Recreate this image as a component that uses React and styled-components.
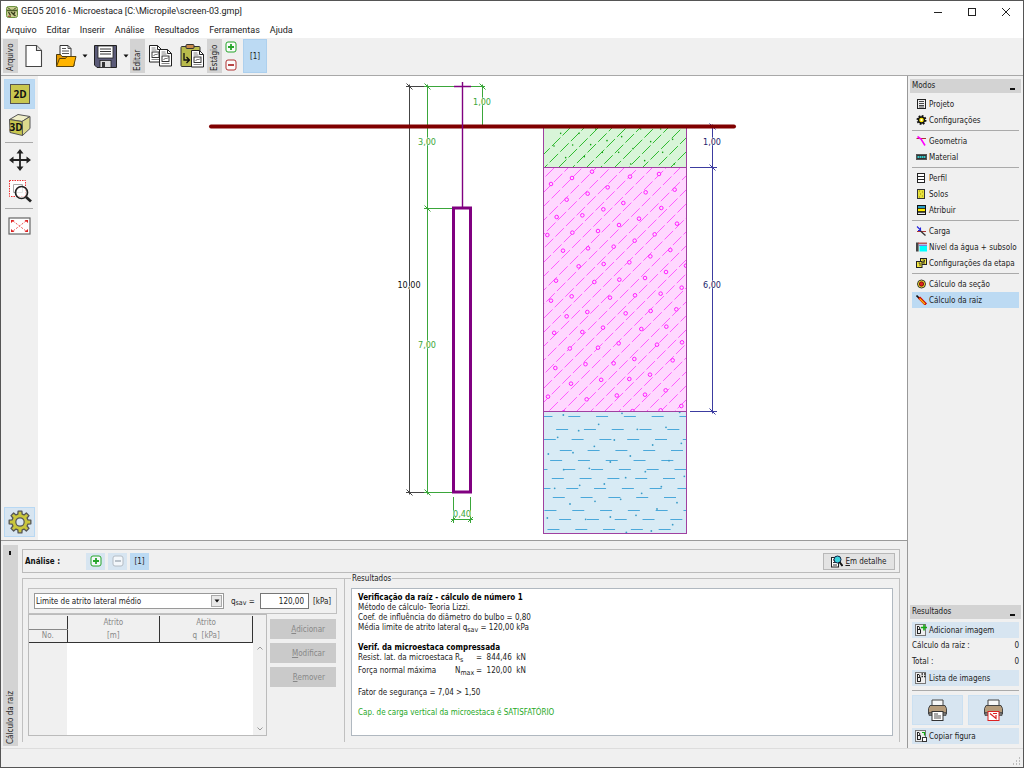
import React from 'react';
import styled, { createGlobalStyle } from 'styled-components';

const modeGroups = [
  [
    { label: 'Projeto', icon: 'project' },
    { label: 'Configurações', icon: 'settings' },
  ],
  [
    { label: 'Geometria', icon: 'geometry' },
    { label: 'Material', icon: 'material' },
  ],
  [
    { label: 'Perfil', icon: 'profile' },
    { label: 'Solos', icon: 'soils' },
    { label: 'Atribuir', icon: 'assign' },
  ],
  [
    { label: 'Carga', icon: 'load' },
    { label: 'Nível da água + subsolo', icon: 'water' },
    { label: 'Configurações da etapa', icon: 'stage' },
  ],
  [
    { label: 'Cálculo da seção', icon: 'section' },
    { label: 'Cálculo da raiz', icon: 'root', active: true },
  ],
];

const menu = ['Arquivo', 'Editar', 'Inserir', 'Análise', 'Resultados', 'Ferramentas', 'Ajuda'];

/* ---------- icons ---------- */

const GearShape = ({ teeth = 8, r = 8, fill, stroke, hole }) => {
  const pts = [];
  for (let i = 0; i < teeth; i++) {
    const a = (i * 2 * Math.PI) / teeth;
    [[-0.3, 0.74], [-0.19, 1], [0.19, 1], [0.3, 0.74]].forEach(([d, k]) => {
      pts.push(`${(Math.sin(a + d * 0.9) * r * k).toFixed(2)},${(-Math.cos(a + d * 0.9) * r * k).toFixed(2)}`);
    });
  }
  return (
    <>
      <polygon points={pts.join(' ')} fill={fill} stroke={stroke} strokeWidth="1.3" strokeLinejoin="round" />
      <circle r={r * 0.38} fill={hole} stroke={stroke} strokeWidth="1.2" />
    </>
  );
};

const modeIcons = {
  project: (
    <>
      <rect x="1.5" y="0.5" width="8" height="9" fill="#eee" stroke="#222" />
      <path d="M3 2.5h5M3 4.5h5M3 6.5h5M3 8h5" stroke="#333" strokeWidth="0.9" />
    </>
  ),
  settings: (
    <>
      <circle cx="5.5" cy="5" r="4" fill="none" stroke="#111" strokeWidth="2" strokeDasharray="1.7 1.4" />
      <circle cx="5.5" cy="5" r="3" fill="#ffe800" stroke="#111" strokeWidth="1.4" />
      <circle cx="5.5" cy="5" r="1" fill="#fff" />
    </>
  ),
  geometry: (
    <>
      <path d="M0.5 2.5H10" stroke="#a33" />
      <path d="M1.5 0.500l3.500 2.500 4 6.5" fill="none" stroke="#f0f" strokeWidth="1.6" />
    </>
  ),
  material: (
    <>
      <rect x="0.5" y="2.5" width="10" height="5" fill="#333" stroke="#555" />
      <path d="M1.5 5h8" stroke="#3cc" strokeWidth="2" strokeDasharray="1.6 0.5" />
    </>
  ),
  profile: (
    <>
      <rect x="1.5" y="0.5" width="7" height="9" fill="#fff" stroke="#222" />
      <path d="M1.5 3.5h7M1.5 6.5h7" stroke="#222" />
    </>
  ),
  soils: (
    <>
      <rect x="1.5" y="0.5" width="7" height="9" fill="#e8e13c" stroke="#333" />
      <path d="M3 2h1M6 3h1M4 5h1M6 7h1M3 8h1" stroke="#998b00" />
    </>
  ),
  assign: (
    <>
      <rect x="1.5" y="0.5" width="8" height="9" fill="#111" stroke="#111" />
      <path d="M2 2h7" stroke="#3cf" strokeWidth="1.5" />
      <path d="M2 5h7" stroke="#fe0" strokeWidth="2.4" />
      <path d="M2 8.3h7" stroke="#fff" strokeWidth="1.2" />
    </>
  ),
  load: (
    <>
      <path d="M1 5.5h9" stroke="#a33" />
      <path d="M1 0.5l4 4M2 4.5h2.5V1.5" fill="none" stroke="#22d" strokeWidth="1.1" />
      <path d="M4.5 5l5 4.5" stroke="#333" strokeWidth="1.3" />
    </>
  ),
  water: (
    <>
      <rect x="0" y="0.5" width="2.6" height="9" fill="#444" />
      <rect x="3.5" y="4" width="7.5" height="5.5" fill="#0ff" />
      <path d="M2 1.2h9" stroke="#a33" strokeWidth="1.2" />
      <path d="M3 3.2h8" stroke="#22c" strokeWidth="0.8" />
    </>
  ),
  stage: (
    <>
      <rect x="4.5" y="0.5" width="6" height="6" fill="#f2e640" stroke="#222" />
      <rect x="0.5" y="3.5" width="5.5" height="6" fill="#f2e640" stroke="#222" />
      <path d="M2.5 5h1.5v3M6.5 2h2v1.7h-1.5v1.3h2" fill="none" stroke="#222" strokeWidth="0.8" />
    </>
  ),
  section: (
    <>
      <circle cx="5.5" cy="5" r="4" fill="#f3ea30" stroke="#333" />
      <circle cx="5.5" cy="5" r="2.2" fill="#e02020" stroke="#600" strokeWidth="0.8" />
    </>
  ),
  root: (
    <>
      <path d="M0.5 0.500l4 4" stroke="#111" strokeWidth="1.6" />
      <path d="M3 2.500l7 7" stroke="#c00" strokeWidth="3" />
      <path d="M3.5 3.500l5.5 5.500" stroke="#fb0" strokeWidth="1.2" />
    </>
  ),
};

const ModeIcon = ({ name }) => (
  <svg width="11" height="10" viewBox="0 0 11 10" aria-hidden="true">{modeIcons[name]}</svg>
);

const LogoIcon = () => (
  <svg width="12" height="12" viewBox="0 0 12 12" aria-hidden="true">
    <rect x="0.5" y="0.5" width="11" height="11" rx="2" fill="#c9cf90" stroke="#6d9440" />
    <path d="M1 4.500h10" stroke="#4a5a28" strokeWidth="1.6" />
    <path d="M1.500 1.500l3 2M10.500 1.500l-3 2" stroke="#4a5a28" />
    <path d="M2.500 6l2 3.500M5 6l4.500 4M9 6l-2 3" stroke="#3c421f" strokeWidth="1.4" />
    <path d="M2 10.300h3" stroke="#9a2a20" strokeWidth="0.9" />
  </svg>
);

const NewIcon = () => (
  <svg width="18" height="24" viewBox="0 0 18 24" aria-hidden="true">
    <path d="M1 1.5h10.500l5 5v16H1z" fill="#fff" stroke="#444" strokeWidth="1.1" />
    <path d="M11.500 1.500v5h5" fill="#ddd" stroke="#444" strokeWidth="1.1" />
  </svg>
);

const OpenIcon = () => (
  <svg width="22" height="24" viewBox="0 0 22 24" aria-hidden="true">
    <path d="M5 13V1.500h8l3 3V14" fill="#fff" stroke="#333" />
    <path d="M13 1.500v3h3M7 4.500h4M7 7h7M7 9.500h7" fill="none" stroke="#444" strokeWidth="0.9" />
    <path d="M1.500 22V10.500h4l1.500 2h12V22z" fill="#e69a00" stroke="#4a3a10" />
    <path d="M1.500 22.500l3-8h6l1.500-2h9l-2.500 10z" fill="#ffb400" stroke="#5a430c" />
  </svg>
);

const SaveIcon = () => (
  <svg width="23" height="23" viewBox="0 0 23 23" aria-hidden="true">
    <path d="M0.500 0.500h22v22H3l-2.500-2.500z" fill="#5b5b78" stroke="#222" />
    <rect x="4" y="1" width="15" height="12" fill="#fff" stroke="#222" strokeWidth="0.8" />
    <path d="M6 4h11M6 6.500h11M6 9h11" stroke="#333" />
    <rect x="6" y="15.500" width="11" height="7" fill="#ddd" stroke="#222" strokeWidth="0.8" />
    <rect x="8" y="17" width="3" height="5" fill="#333" />
  </svg>
);

const SheetPath = ({ x, y }) => (
  <g transform={`translate(${x} ${y})`}>
    <path d="M0.500 0.500h8l4 4v12.500h-12z" fill="#fff" stroke="#222" />
    <path d="M8.500 0.500v4h4" fill="none" stroke="#222" />
    <path d="M2.500 3h4M2.500 5h5M2.500 14.500h8" stroke="#666" strokeWidth="0.8" />
    <rect x="3" y="7" width="7" height="5.500" fill="#fff" stroke="#222" strokeWidth="0.9" />
    <path d="M4.500 11l2-2 1 1 1.500-1.500" fill="none" stroke="#333" strokeWidth="0.8" />
  </g>
);

const CopyIcon = () => (
  <svg width="24" height="24" viewBox="0 0 24 24" aria-hidden="true">
    <SheetPath x={0} y={1} />
    <SheetPath x={10} y={5} />
  </svg>
);

const PasteIcon = () => (
  <svg width="24" height="24" viewBox="0 0 24 24" aria-hidden="true">
    <rect x="1" y="2.500" width="19" height="20" rx="1" fill="#b9bb4c" stroke="#333" />
    <rect x="6" y="0.500" width="8" height="4" rx="1" fill="#c98a4a" stroke="#333" />
    <path d="M4 9v7h5M6.500 13l3 3-3 3" fill="none" stroke="#111" strokeWidth="1.3" />
    <SheetPath x={11} y={6} />
  </svg>
);

const PlusMinusIcon = ({ kind, color }) => (
  <svg width="12" height="12" viewBox="0 0 12 12" aria-hidden="true">
    <rect x="1" y="1" width="10" height="10" rx="2" fill="#fff" fillOpacity="0.7" stroke={color} strokeWidth="1" />
    <path d={kind === 'plus' ? 'M3 6h6M6 3v6' : 'M3 6h6'} stroke={color} strokeWidth="1.800" />
  </svg>
);

const Caret = () => (
  <svg width="6" height="4" viewBox="0 0 6 4" aria-hidden="true"><path d="M0.500 0.500h5L3 3.500z" fill="#111" /></svg>
);

const View2DIcon = () => (
  <svg width="20" height="20" viewBox="0 0 20 20" aria-hidden="true">
    <rect x="0.500" y="0.500" width="19" height="19" fill="#c9c74f" stroke="#555" />
    <text x="10" y="14" textAnchor="middle" fontFamily="Open Sans, sans-serif" fontSize="10" fontWeight="700" fill="#111">2D</text>
  </svg>
);

const View3DIcon = () => (
  <svg width="24" height="24" viewBox="0 0 24 24" aria-hidden="true">
    <path d="M1.500 6.500L10 1.500l12 2-8 5z" fill="#f0efc8" stroke="#555" />
    <path d="M14 8.500l8-5v12l-7.500 7z" fill="#dcd98c" stroke="#555" />
    <path d="M1.500 6.500l12.500 2 0.500 14-12.500-3z" fill="#c9c74f" stroke="#555" />
    <text x="8" y="18" textAnchor="middle" fontFamily="Open Sans, sans-serif" fontSize="10" fontWeight="700" fill="#111">3D</text>
  </svg>
);

const MoveIcon = () => (
  <svg width="22" height="22" viewBox="0 0 22 22" aria-hidden="true">
    <path d="M11 2v18M2 11h18" stroke="#222" strokeWidth="1.800" />
    <path d="M11 0l3.500 4.500h-7zM11 22l3.500-4.500h-7zM0 11l4.500-3.500v7zM22 11l-4.500-3.500v7z" fill="#222" />
  </svg>
);

const ZoomIcon = () => (
  <svg width="24" height="24" viewBox="0 0 24 24" aria-hidden="true">
    <rect x="1.500" y="1.500" width="16" height="16" fill="#fff" stroke="#e33" strokeDasharray="1.500 1" />
    <path d="M5.500 5.500h9v8h-9z" fill="none" stroke="#aaa" />
    <circle cx="13.500" cy="13.500" r="6" fill="#fff" fillOpacity="0.700" stroke="#222" strokeWidth="1.700" />
    <path d="M18 18l5 4.500" stroke="#222" strokeWidth="2.800" />
  </svg>
);

const FitIcon = () => (
  <svg width="23" height="18" viewBox="0 0 23 18" aria-hidden="true">
    <rect x="1" y="1" width="21" height="16" fill="#fff" stroke="#666" strokeWidth="1.200" />
    <path d="M5 4l13 10M18 4l-13 10" stroke="#e55" strokeWidth="1" strokeDasharray="2 1.500" />
    <path d="M3 3h3.500L3 6zM20 3h-3.500L20 6zM3 15h3.500L3 12zM20 15h-3.500L20 12z" fill="#d22" />
  </svg>
);

const PictureIcon = ({ badge }) => (
  <svg width="12" height="12" viewBox="0 0 12 12" aria-hidden="true">
    <rect x="0.500" y="0.500" width="10" height="11" fill="#eee" stroke="#777" />
    <path d="M2.500 2v8M2.500 5.500h3v4h-3M2.500 2.500h1.500l1 1.500-1 1.500" fill="none" stroke="#222" />
    {badge === 'plus' && <path d="M6 3.500h6M9 0.500v6" stroke="#1a1" strokeWidth="1.600" />}
    {badge === 'list' && <path d="M6.500 2h4M6.500 4.500h4" stroke="#222" strokeDasharray="1.500 1" strokeWidth="1.500" />}
    {badge === 'copy' && (
      <>
        <path d="M7 2.500h2.500v3" fill="none" stroke="#1a1" strokeWidth="1.200" />
        <rect x="7.500" y="7.500" width="4" height="4" fill="#fff" stroke="#333" />
      </>
    )}
  </svg>
);

const PrinterIcon = ({ red }) => (
  <svg width="19" height="22" viewBox="0 0 19 22" aria-hidden="true">
    <path d="M4 7V1h11v6" fill="#f7f7f7" stroke="#444" />
    <path d="M2 6.500h15l1.500 3v5.500h-18V9.500z" fill="#b59b7a" stroke="#444" />
    <path d="M1 13.500h17v3H1z" fill="#777" stroke="#444" strokeWidth="0.700" />
    <rect x="4" y="12.500" width="11" height="9" fill="#fff" stroke={red ? '#d22' : '#333'} />
    <path d={red ? 'M6 14.500l6 5V16M9 14.500h4' : 'M6 15h4M6 17h7M6 19h7'} fill="none" stroke={red ? '#d22' : '#555'} strokeWidth="1.200" />
  </svg>
);

const DetailIcon = () => (
  <svg width="12" height="13" viewBox="0 0 12 13" aria-hidden="true">
    <rect x="0.500" y="2.500" width="7" height="9.500" fill="#fff" stroke="#222" />
    <path d="M2 5h3M2 7.500h4M2 10h4" stroke="#333" />
    <circle cx="6.500" cy="4.500" r="3.500" fill="#3cd2dc" stroke="#124" />
    <path d="M8.500 7l3 4" stroke="#111" strokeWidth="2" />
  </svg>
);

/* ---------- drawing ---------- */

// x - y of every diagonal of circles, and the phase along it
const pebbles = [
  [195, 391], [100, 406], [1, 371], [-78, 330], [-159, 285], [-241, 307],
  [-323, 333], [-434, 308], [-509, 353], [-596, 365], [-698, 380], [-806, 350],
];

const waterRows = [
  [109, 31], [149, 78], [177, 41], [211, 89], [241, 60], [269, 16],
  [296, 65], [325, 25], [351, 68], [391, 43], [419, 87], [448, 52],
];

const waterDots = [
  [100, 105], [276, 100], [449, 97], [206, 133], [146, 152], [322, 148], [408, 142], [83, 172],
  [253, 180], [454, 190], [193, 199], [368, 195], [55, 222], [129, 218], [301, 228], [241, 246],
  [417, 242], [178, 265], [346, 275], [101, 269], [287, 293], [463, 289], [223, 312], [149, 316],
  [74, 325], [394, 320], [335, 340], [272, 358], [195, 364], [120, 372], [441, 368], [381, 387],
  [318, 406], [241, 411], [52, 414], [167, 418], [428, 434], [364, 453], [289, 457],
];

const sandDots = [
  [92, 70], [147, 70], [197, 57], [275, 80], [332, 57], [392, 57], [72, 108], [128, 105], [182, 104],
  [231, 92], [362, 95], [428, 88], [309, 116], [107, 143], [163, 140], [217, 127], [266, 127],
  [398, 127], [302, 162], [344, 152], [433, 162],
];

const Hatch = ({ top, bottom, start, color }) => {
  const lines = [];
  for (let s = start, i = 0; s < 687 + bottom; s += 14, i++) {
    lines.push(
      <line key={s} x1={s - top} y1={top} x2={s - bottom} y2={bottom} strokeDashoffset={(i * 7) % 15} />
    );
  }
  return <g stroke={color} strokeDasharray="12 3" strokeWidth="1">{lines}</g>;
};

const Pebbles = () => {
  const out = [];
  pebbles.forEach(([c, phase]) => {
    for (let s = phase; s < 1500; s += 94) {
      out.push(<circle key={`${c}-${s}`} cx={530 + (s + c) / 6} cy={110 + (s - c) / 6} r="1.800" />);
    }
  });
  return <g fill="#ffd8ff" stroke="#ff20ff">{out}</g>;
};

const Tick = ({ x, y }) => <path d={`M${x - 3} ${y - 3}l6 6M${x} ${y - 2}v4`} />;

const Drawing = () => (
  <DrawingSvg viewBox="38 76 869 464" role="img" aria-label="Microestaca">
    <defs>
      <clipPath id="sand"><rect x="544" y="127" width="142" height="40" /></clipPath>
      <clipPath id="clay"><rect x="544" y="168" width="142" height="243" /></clipPath>
      <clipPath id="silt"><rect x="544" y="412" width="142" height="121" /></clipPath>
    </defs>

    <rect x="543" y="127" width="144" height="41" fill="#d8f5d8" />
    <rect x="543" y="168" width="144" height="243" fill="#ffd8ff" />
    <rect x="543" y="411" width="144" height="123" fill="#d8ebf5" />

    <g clipPath="url(#sand)">
      <Hatch top={127} bottom={168} start={698} color="#30bb30" />
      {sandDots.map(([x, y]) => (
        <circle key={`${x}-${y}`} cx={530 + x / 3} cy={110 + y / 3} r="0.800" fill="#12a012" />
      ))}
    </g>
    <g clipPath="url(#clay)">
      <Hatch top={168} bottom={412} start={722} color="#ff5cff" />
      <Pebbles />
    </g>
    <g clipPath="url(#silt)">
      {waterRows.map(([y, x]) => (
        <line
          key={y}
          x1={530 + (x - 83) / 3}
          x2="700"
          y1={Math.floor(380 + y / 3) + 0.5}
          y2={Math.floor(380 + y / 3) + 0.5}
          stroke="#4aa8da"
          strokeDasharray="12 15.800"
        />
      ))}
      {waterDots.map(([x, y]) => (
        <circle key={`${x}-${y}`} cx={530 + x / 3} cy={380 + y / 3} r="0.900" fill="#3a9cc8" />
      ))}
    </g>

    <g fill="none" stroke="#a040a0">
      <rect x="543.500" y="126.500" width="143" height="407" />
      <path d="M543 167.500h144M543 411.500h144" />
    </g>

    <g fill="none" stroke="#444">
      <path d="M409.500 86v407M406 86.500h21M406 492.500h21" />
      <Tick x={409.5} y={86.5} />
      <Tick x={409.5} y={492.5} />
    </g>
    <g fill="none" stroke="#3aa63a">
      <path d="M427.500 86v407M424 86.500h61M424 208.500h29M424 492.500h29M482.500 86v40" />
      <path d="M453.500 497v26M470.500 497v26M451 519.500h22" />
      <Tick x={427.5} y={86.5} />
      <Tick x={427.5} y={208.5} />
      <Tick x={427.5} y={492.5} />
      <Tick x={482.5} y={86.5} />
      <path d="M451 522l5-5M468 522l5-5" />
    </g>
    <g fill="none" stroke="#3c3ca0">
      <path d="M712.500 126v286M690 167.500h27M690 411.500h27" />
      <Tick x={712.5} y={126.5} />
      <Tick x={712.5} y={167.5} />
      <Tick x={712.5} y={411.5} />
    </g>

    <path d="M211 126.500h523" stroke="#800000" strokeWidth="4" strokeLinecap="round" />
    <g fill="none" stroke="#800080">
      <path d="M462.500 82v126M454 86.500h17" strokeWidth="1.400" />
      <rect x="453.500" y="208" width="17" height="284" strokeWidth="3" />
    </g>

    <DimText x="409" y="288" fill="#111">10,00</DimText>
    <DimText x="427" y="145" fill="#3aa63a">3,00</DimText>
    <DimText x="427" y="348" fill="#3aa63a">7,00</DimText>
    <DimText x="482" y="105" fill="#3aa63a">1,00</DimText>
    <DimText x="462" y="517" fill="#3aa63a">0,40</DimText>
    <DimText x="712" y="145" fill="#22226a">1,00</DimText>
    <DimText x="712" y="288" fill="#22226a">6,00</DimText>
  </DrawingSvg>
);

/* ---------- page ---------- */

const App = () => (
  <Window>
    <GlobalStyle />
    <TitleBar>
      <LogoIcon />
      <Title>GEO5 2016 - Microestaca [C:\Micropile\screen-03.gmp]</Title>
      <WindowButton aria-label="Minimizar">
        <svg width="10" height="10"><path d="M1 5.500h8" stroke="#222" /></svg>
      </WindowButton>
      <WindowButton aria-label="Maximizar">
        <svg width="10" height="10"><rect x="1.500" y="1.500" width="7" height="7" fill="none" stroke="#222" /></svg>
      </WindowButton>
      <WindowButton aria-label="Fechar">
        <svg width="10" height="10"><path d="M1 1l8 8M9 1l-8 8" stroke="#222" /></svg>
      </WindowButton>
    </TitleBar>

    <MenuBar>
      {menu.map((item) => <MenuItem key={item}>{item}</MenuItem>)}
    </MenuBar>

    <Toolbar>
      <SideTab>Arquivo</SideTab>
      <ToolButton $w={32} aria-label="Novo"><NewIcon /></ToolButton>
      <ToolButton $w={31} aria-label="Abrir"><OpenIcon /></ToolButton>
      <ToolButton $w={8} aria-label="Abrir recente"><Caret /></ToolButton>
      <ToolButton $w={33} aria-label="Salvar"><SaveIcon /></ToolButton>
      <ToolButton $w={8} aria-label="Opções de salvar"><Caret /></ToolButton>
      <SideTab>Editar</SideTab>
      <ToolButton $w={31} aria-label="Copiar"><CopyIcon /></ToolButton>
      <ToolButton $w={31} aria-label="Colar"><PasteIcon /></ToolButton>
      <SideTab>Estágio</SideTab>
      <StageButtons>
        <ToolButton $w={17} aria-label="Adicionar estágio"><PlusMinusIcon kind="plus" color="#25a52a" /></ToolButton>
        <ToolButton $w={17} aria-label="Remover estágio"><PlusMinusIcon kind="minus" color="#b03030" /></ToolButton>
      </StageButtons>
      <StageTab>[1]</StageTab>
    </Toolbar>

    <Body>
      <Content>
        <Workspace>
          <ViewBar>
            <ViewButton $bg="#bcdaf3" aria-label="2D"><View2DIcon /></ViewButton>
            <ViewButton aria-label="3D"><View3DIcon /></ViewButton>
            <Rule />
            <ViewButton aria-label="Mover"><MoveIcon /></ViewButton>
            <ViewButton aria-label="Ampliar região"><ZoomIcon /></ViewButton>
            <Rule />
            <ViewButton aria-label="Ajustar à tela"><FitIcon /></ViewButton>
            <Spacer />
            <ViewButton $bg="#d7e5f1" aria-label="Configurações do desenho">
              <svg width="24" height="24" viewBox="-12 -12 24 24">
                <GearShape r={11} fill="#c9c63c" stroke="#555" hole="#d7e5f1" />
              </svg>
            </ViewButton>
          </ViewBar>
          <Canvas><Drawing /></Canvas>
        </Workspace>

        <Frame>
          <FrameTab><span>Cálculo da raiz</span><Pin /></FrameTab>
          <FrameBody>
            <AnalysisBar>
              <AnalysisLabel>Análise :</AnalysisLabel>
              <SmallButton aria-label="Adicionar análise"><PlusMinusIcon kind="plus" color="#25a52a" /></SmallButton>
              <SmallButton aria-label="Remover análise" disabled><PlusMinusIcon kind="minus" color="#b4bcc4" /></SmallButton>
              <SmallButton $active>[1]</SmallButton>
              <Spacer />
              <DetailButton><DetailIcon /><span><u>E</u>m detalhe</span></DetailButton>
            </AnalysisBar>

            <Groups>
              <InputGroup>
                <FrictionBar>
                  <SelectBox>
                    <Select aria-label="Tipo de atrito">
                      <option>Limite de atrito lateral médio</option>
                    </Select>
                    <SelectArrow><Caret /></SelectArrow>
                  </SelectBox>
                  <label htmlFor="qsav">q<sub>sav</sub> =</label>
                  <NumberInput id="qsav" defaultValue="120,00" />
                  <span>[kPa]</span>
                </FrictionBar>
                <TableRow>
                  <TableBox>
                    <Table>
                      <thead>
                        <tr><th aria-label="Número" /><th>Atrito</th><th>Atrito</th></tr>
                        <tr><th>No.</th><th>[m]</th><th>q&nbsp; [kPa]</th></tr>
                      </thead>
                      <tbody>
                        <tr><td /><td /><td /></tr>
                      </tbody>
                    </Table>
                    <Scroll>
                      <svg width="6" height="4"><path d="M0.500 3.500L3 1l2.500 2.500" fill="none" stroke="#999" /></svg>
                      <svg width="6" height="4"><path d="M0.500 0.500L3 3l2.500-2.500" fill="none" stroke="#999" /></svg>
                    </Scroll>
                  </TableBox>
                  <ActionList>
                    <ActionButton disabled><u>A</u>dicionar</ActionButton>
                    <ActionButton disabled><u>M</u>odificar</ActionButton>
                    <ActionButton disabled><u>R</u>emover</ActionButton>
                  </ActionList>
                </TableRow>
              </InputGroup>

              <ResultGroup>
                <legend>Resultados</legend>
                <ResultBox>
                  <h2>Verificação da raíz - cálculo de número 1</h2>
                  <p>Método de cálculo- Teoria Lizzi.</p>
                  <p>Coef. de influência do diâmetro do bulbo = 0,80</p>
                  <p>Média limite de atrito lateral q<sub>sav</sub> = 120,00 kPa</p>
                  <h2>Verif. da microestaca compressada</h2>
                  <ResultLine>
                    <span>Resist. lat. da microestaca</span><span>R<sub>s</sub></span><span>=&nbsp; 844,46&nbsp; kN</span>
                  </ResultLine>
                  <ResultLine>
                    <span>Força normal máxima</span><span>N<sub>max</sub></span><span>=&nbsp; 120,00&nbsp; kN</span>
                  </ResultLine>
                  <Factor>Fator de segurança = 7,04 &gt; 1,50</Factor>
                  <Verdict>Cap. de carga vertical da microestaca é SATISFATÓRIO</Verdict>
                </ResultBox>
              </ResultGroup>
            </Groups>
          </FrameBody>
        </Frame>
      </Content>

      <Sidebar>
        <PanelHeader>Modos<Collapse aria-label="Recolher modos" /></PanelHeader>
        <ModeList>
          {modeGroups.map((group) => (
            <ModeGroup key={group[0].label}>
              {group.map((mode) => (
                <ModeButton key={mode.label} $active={mode.active}>
                  <ModeIcon name={mode.icon} />
                  {mode.label}
                </ModeButton>
              ))}
            </ModeGroup>
          ))}
        </ModeList>
        <Spacer />
        <PanelHeader>Resultados<Collapse aria-label="Recolher resultados" /></PanelHeader>
        <Outputs>
          <OutputButton><PictureIcon badge="plus" />Adicionar imagem</OutputButton>
          <Count><span>Cálculo da raiz :</span><span>0</span></Count>
          <Count><span>Total :</span><span>0</span></Count>
          <OutputButton><PictureIcon badge="list" />Lista de imagens</OutputButton>
          <OutputRule />
          <PrintRow>
            <PrintButton aria-label="Imprimir"><PrinterIcon /></PrintButton>
            <PrintButton aria-label="Imprimir figura"><PrinterIcon red /></PrintButton>
          </PrintRow>
          <OutputButton><PictureIcon badge="copy" />Copiar figura</OutputButton>
        </Outputs>
      </Sidebar>
    </Body>

    <StatusBar>
      <svg width="8" height="8" aria-hidden="true">
        <path d="M6 1h1M3 4h1M6 4h1M0 7h1M3 7h1M6 7h1" stroke="#aaa" strokeWidth="1.500" />
      </svg>
    </StatusBar>
  </Window>
);

export default App;

/* ---------- styles ---------- */

const GlobalStyle = createGlobalStyle`
* { box-sizing: border-box; }
body { margin: 0; background: #f0f0f0; }
svg { display: block; flex: none; }
button, input, select { font: inherit; color: inherit; margin: 0; }
`

const Window = styled.div`
min-height: 100vh;
display: flex;
flex-direction: column;
border: 1px solid #555;
background: #f0f0f0;
color: #222;
font: 8px/11px "DejaVu Sans Condensed", "DejaVu Sans", sans-serif;
`

const PlainButton = styled.button`
display: flex;
align-items: center;
justify-content: center;
padding: 0;
border: 0;
background: none;
`

const TitleBar = styled.header`
display: flex;
align-items: center;
height: 21px;
padding-left: 5px;
background: #fff;
font-family: Roboto, sans-serif;
font-size: 9px;
`

const Title = styled.span`
flex: 1;
margin-left: 3px;
`

const WindowButton = styled(PlainButton)`
width: 34px;
height: 20px;
`

const MenuBar = styled.nav`
display: flex;
gap: 10px;
height: 16px;
padding-left: 5px;
background: #fff;
`

const MenuItem = styled(PlainButton)`
font-family: Roboto, sans-serif;
font-size: 9px;
`

const Toolbar = styled.div`
display: flex;
align-items: center;
height: 38px;
padding: 1px 2px 2px;
border-bottom: 1px solid #a8a8a8;
`

const SideTab = styled.div`
width: 15px;
height: 34px;
background: #d3d3d3;
writing-mode: vertical-rl;
transform: rotate(180deg);
line-height: 15px;
padding-top: 2px;
`

const ToolButton = styled(PlainButton)`
width: ${(p) => p.$w}px;
`

const StageButtons = styled.div`
display: flex;
flex-direction: column;
gap: 6px;
`

const StageTab = styled(PlainButton)`
width: 24px;
height: 34px;
margin-left: 4px;
background: #bcdaf3;
border: 1px solid #add0ee;
`

const Body = styled.div`
display: flex;
flex: 1;
`

const Content = styled.main`
display: flex;
flex-direction: column;
flex: 1;
min-width: 0;
`

const Workspace = styled.section`
display: flex;
flex: 1;
`

const ViewBar = styled.div`
display: flex;
flex-direction: column;
gap: 1px;
width: 37px;
padding: 3px;
`

const ViewButton = styled(PlainButton)`
height: 30px;
background: ${(p) => p.$bg || 'none'};
border: 1px solid ${(p) => (p.$bg ? '#b8d8f3' : 'transparent')};
`

const Rule = styled.hr`
width: 28px;
margin: 1px;
border: 0;
border-top: 1px solid #aaa;
`

const Spacer = styled.div`
flex: 1;
`

const Canvas = styled.div`
flex: 1;
display: flex;
background: #fff;
`

const DrawingSvg = styled.svg`
width: 100%;
height: 100%;
flex: 1;
`

const DimText = styled.text`
font: 9px "DejaVu Sans Condensed", sans-serif;
text-anchor: middle;
paint-order: stroke;
stroke: #fff;
stroke-width: 1px;
`

const Frame = styled.section`
display: flex;
gap: 4px;
padding: 4px 7px 2px 2px;
border-top: 1px solid #999;
`

const FrameTab = styled.div`
display: flex;
justify-content: space-between;
align-items: center;
width: 15px;
padding: 2px 0 6px;
background: #d3d3d3;
writing-mode: vertical-rl;
transform: rotate(180deg);
line-height: 15px;
`

const Pin = styled.i`
width: 2px;
height: 4px;
background: #111;
`

const FrameBody = styled.div`
display: flex;
flex-direction: column;
flex: 1;
gap: 5px;
min-width: 0;
padding: 4px 0;
`

const AnalysisBar = styled.div`
display: flex;
align-items: center;
gap: 3px;
height: 24px;
padding: 0 4px 0 2px;
border: 1px solid #bbb;
`

const AnalysisLabel = styled.strong`
width: 58px;
color: #111;
`

const SmallButton = styled(PlainButton)`
width: 19px;
height: 17px;
background: ${(p) => (p.$active ? '#bcdaf3' : '#d7e5f1')};
`

const DetailButton = styled(PlainButton)`
gap: 2px;
width: 72px;
height: 17px;
background: #e3e3e3;
border: 1px solid #b8b8b8;
`

const Groups = styled.div`
display: flex;
align-items: stretch;
`

const InputGroup = styled.div`
width: 323px;
height: 164px;
padding: 9px 7px 6px 5px;
border: 1px solid #c0c0c0;
border-bottom: 0;
`

const FrictionBar = styled.div`
display: flex;
align-items: center;
gap: 4px;
height: 26px;
padding-left: 5px;
border: 1px solid #c0c0c0;

sub {
  font-size: 7px;
  line-height: 1px;
  vertical-align: -1px;
}
label {
  width: 25px;
  margin-left: 3px;
  white-space: nowrap;
}
`

const SelectBox = styled.div`
display: flex;
width: 190px;
height: 16px;
border: 1px solid #999;
background: #fff;
position: relative;
`

const Select = styled.select`
appearance: none;
flex: 1;
padding: 0 1px;
border: 0;
background: none;
`

const SelectArrow = styled.span`
position: absolute;
right: 1px;
top: 1px;
display: flex;
align-items: center;
justify-content: center;
width: 11px;
height: 12px;
border: 1px solid #aaa;
background: #e8e8e8;
pointer-events: none;
`

const NumberInput = styled.input`
width: 49px;
height: 16px;
padding: 0 4px;
border: 1px solid #777;
background: #fff;
text-align: right;
`

const TableRow = styled.div`
display: flex;
gap: 3px;
`

const TableBox = styled.div`
display: flex;
width: 239px;
height: 122px;
padding-top: 1px;
border: 1px solid #bbb;
`

const Table = styled.table`
width: 224px;
border-collapse: collapse;
table-layout: fixed;

th {
  height: 13px;
  padding: 0;
  border-right: 1px solid #333;
  color: #888;
  font-weight: normal;
  text-align: center;
}
th:first-child {
  width: 38px;
}
tr:first-child th:first-child {
  border-bottom: 1px solid #888;
}
tr:last-child th {
  border-bottom: 1px solid #333;
}
td {
  padding: 0;
  background: #fff;
}
td:first-child {
  background: #f0f0f0;
}
`

const Scroll = styled.div`
display: flex;
flex: 1;
flex-direction: column;
justify-content: space-between;
align-items: center;
padding: 30px 0 4px;
`

const ActionList = styled.div`
display: flex;
flex: 1;
flex-direction: column;
gap: 4px;
padding: 5px 1px 0 0;
`

const ActionButton = styled.button`
height: 20px;
padding: 0 11px;
border: 0;
background: #cacaca;
color: #888;
text-align: right;
`

const ResultGroup = styled.fieldset`
flex: 1;
min-width: 0;
margin: -5px 0 0 -1px;
padding: 4px 6px 6px;
border: 1px solid #c0c0c0;
border-bottom: 0;
display: flex;

legend {
  padding: 0 1px;
}
`

const ResultBox = styled.div`
flex: 1;
padding: 4px 6px;
border: 1px solid #b0b8c0;
background: #fff;
line-height: 10px;

h2 {
  margin: 0;
  font-size: 8px;
  line-height: 10px;
  color: #000;
}
p {
  margin: 0;
}
p + h2 {
  margin-top: 10px;
}
sub {
  font-size: 7px;
  line-height: 1px;
  vertical-align: -2px;
}
`

const ResultLine = styled.p`
display: grid;
grid-template-columns: 97px 21px auto;
line-height: 10px;

& + & {
  margin-top: 3px;
}
`

const Factor = styled.p`
&& {
  margin-top: 12px;
}
`

const Verdict = styled.p`
color: #1fa81f;
&& {
  margin-top: 10px;
}
`

const Sidebar = styled.aside`
display: flex;
flex-direction: column;
width: 116px;
padding: 3px 2px 4px;
border-left: 1px solid #999;
`

const PanelHeader = styled.div`
display: flex;
justify-content: space-between;
height: 14px;
padding: 0 6px 0 2px;
background: #d3d3d3;
line-height: 14px;
`

const Collapse = styled(PlainButton)`
width: 5px;
height: 2px;
margin-top: 9px;
background: #111;
`

const ModeList = styled.nav`
padding: 3px 2px;
`

const ModeGroup = styled.div`
& + & {
  margin: 2px 0 0;
  padding-top: 2px;
  border-top: 1px solid #aaa;
}
`

const ModeButton = styled(PlainButton)`
justify-content: flex-start;
gap: 2px;
width: 100%;
height: 16px;
padding-left: 4px;
background: ${(p) => (p.$active ? '#bcdaf3' : 'none')};
white-space: nowrap;
`

const Outputs = styled.div`
display: flex;
flex-direction: column;
padding: 3px 2px 0;
`

const OutputButton = styled(PlainButton)`
justify-content: flex-start;
gap: 2px;
height: 16px;
padding-left: 3px;
background: #d7e5f1;
`

const Count = styled.div`
display: flex;
justify-content: space-between;
line-height: 16px;
`

const OutputRule = styled.hr`
width: 100%;
margin: 4px 0;
border: 0;
border-top: 1px solid #aaa;
`

const PrintRow = styled.div`
display: flex;
gap: 5px;
margin-bottom: 3px;
`

const PrintButton = styled(PlainButton)`
flex: 1;
height: 30px;
background: #d7e5f1;
border: 1px solid #cbe0f1;
`

const StatusBar = styled.footer`
display: flex;
align-items: flex-end;
justify-content: flex-end;
height: 19px;
padding: 2px;
border-top: 1px solid #ddd;
`
